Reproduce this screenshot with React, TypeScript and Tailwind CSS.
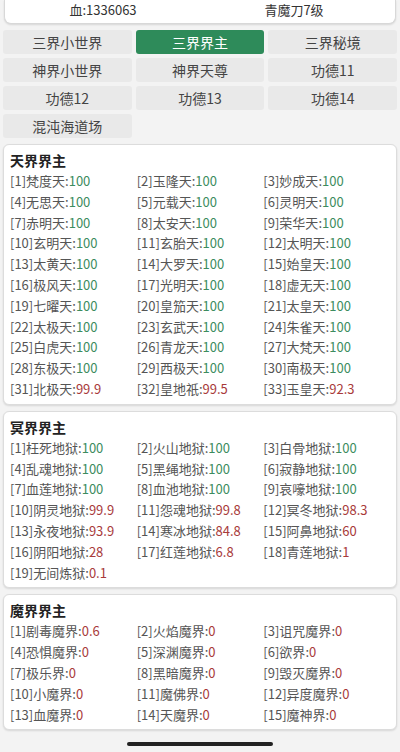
import React from "react";

type Entry = [string, number];

const tabs = [
  "三界小世界",
  "三界界主",
  "三界秘境",
  "神界小世界",
  "神界天尊",
  "功德11",
  "功德12",
  "功德13",
  "功德14",
  "混沌海道场",
];

const heaven: Entry[] = [
  ["梵度天", 100], ["玉隆天", 100], ["妙成天", 100],
  ["无思天", 100], ["元载天", 100], ["灵明天", 100],
  ["赤明天", 100], ["太安天", 100], ["荣华天", 100],
  ["玄明天", 100], ["玄胎天", 100], ["太明天", 100],
  ["太黄天", 100], ["大罗天", 100], ["始皇天", 100],
  ["极风天", 100], ["光明天", 100], ["虚无天", 100],
  ["七曜天", 100], ["皇笳天", 100], ["太皇天", 100],
  ["太极天", 100], ["玄武天", 100], ["朱雀天", 100],
  ["白虎天", 100], ["青龙天", 100], ["大梵天", 100],
  ["东极天", 100], ["西极天", 100], ["南极天", 100],
  ["北极天", 99.9], ["皇地祇", 99.5], ["玉皇天", 92.3],
];

const underworld: Entry[] = [
  ["枉死地狱", 100], ["火山地狱", 100], ["白骨地狱", 100],
  ["乱魂地狱", 100], ["黑绳地狱", 100], ["寂静地狱", 100],
  ["血莲地狱", 100], ["血池地狱", 100], ["哀嚎地狱", 100],
  ["阴灵地狱", 99.9], ["怨魂地狱", 99.8], ["冥冬地狱", 98.3],
  ["永夜地狱", 93.9], ["寒冰地狱", 84.8], ["阿鼻地狱", 60],
  ["阴阳地狱", 28], ["红莲地狱", 6.8], ["青莲地狱", 1],
  ["无间炼狱", 0.1],
];

const demon: Entry[] = [
  ["剧毒魔界", 0.6], ["火焰魔界", 0], ["诅咒魔界", 0],
  ["恐惧魔界", 0], ["深渊魔界", 0], ["欲界", 0],
  ["极乐界", 0], ["黑暗魔界", 0], ["毁灭魔界", 0],
  ["小魔界", 0], ["魔佛界", 0], ["异度魔界", 0],
  ["血魔界", 0], ["天魔界", 0], ["魔神界", 0],
];

function Section({ title, items }: { title: string; items: Entry[] }) {
  return (
    <div className="mx-[3px] mt-[6px] rounded-[6px] border border-[#dcdcdc] bg-white px-[6px] pb-[4px] pt-[5px] shadow-[0_1px_2px_rgba(0,0,0,0.12)]">
      <div className="h-[21px] text-[14px] font-bold leading-[21px] text-[#222]">{title}</div>
      <div className="grid grid-cols-3">
        {items.map(([name, v], i) => (
          <div key={name} className="whitespace-nowrap text-[13px] leading-[20.8px] text-[#555]">
            [{i + 1}]{name}:
            <span className={v >= 100 ? "text-[#3c8c5e]" : "text-[#a83a3a]"}>{v}</span>
          </div>
        ))}
      </div>
    </div>
  );
}

export default function App() {
  return (
    <div
      className="relative h-[752px] w-[400px] overflow-hidden bg-[#f3f3f3]"
      style={{ fontFamily: '"Noto Sans CJK SC", "Noto Sans", sans-serif' }}
    >
      <div className="mx-[4px] flex h-[24px] items-start rounded-b-[7px] border-x border-b border-[#d8d8d8] bg-white text-[13px] leading-[20px] text-[#333] shadow-[0_1px_2px_rgba(0,0,0,0.12)]">
        <span className="w-[196px] text-center">血:1336063</span>
        <span className="w-[186px] text-center">青魔刀7级</span>
      </div>

      <div className="mt-[6px] grid grid-cols-3 gap-[4px] px-[3px]">
        {tabs.map((t) => (
          <div
            key={t}
            className={
              t === "三界界主"
                ? "flex h-[24px] items-center justify-center rounded-[3px] bg-[#2e8b5a] text-[14px] text-white"
                : "flex h-[24px] items-center justify-center rounded-[3px] bg-[#e9e9e9] text-[14px] text-[#444]"
            }
          >
            {t}
          </div>
        ))}
      </div>

      <div className="mt-[1px]">
        <Section title="天界界主" items={heaven} />
        <Section title="冥界界主" items={underworld} />
        <Section title="魔界界主" items={demon} />
      </div>

      <div className="absolute bottom-[6px] left-[127px] h-[4px] w-[146px] rounded-full bg-[#222]" />
    </div>
  );
}
